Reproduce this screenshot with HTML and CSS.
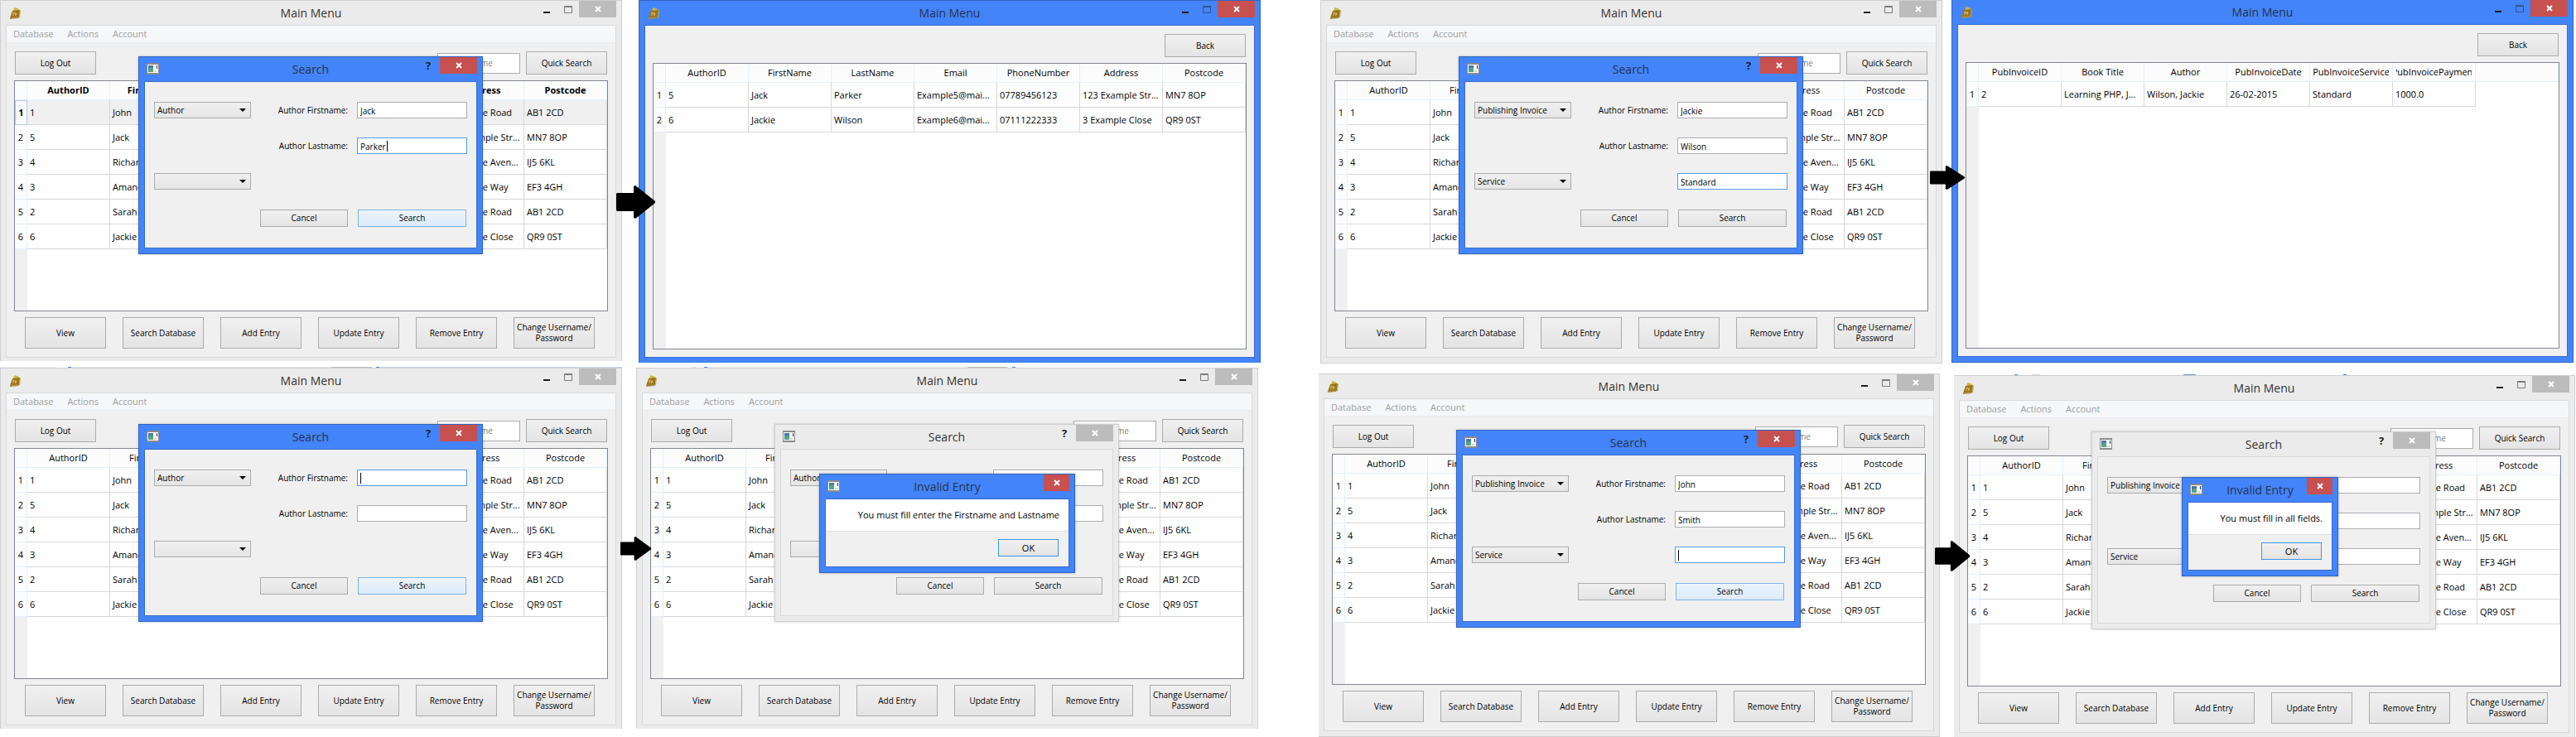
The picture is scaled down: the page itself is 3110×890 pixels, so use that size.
FILE: index.html
```html
<!DOCTYPE html>
<html lang="en">
<head>
<meta charset="utf-8">
<title>Main Menu – Search</title>
<link rel="stylesheet" href="styles.css">
</head>
<body>
<svg class="sprite" aria-hidden="true">
  <symbol id="i-app" viewBox="0 0 13 14">
    <path d="M5 1l1-1 5 2-1 2-6 1z" fill="#cdb83a"/>
    <path d="M3 4l9-1-1 9-11 1z" fill="#9a7414"/>
    <path d="M12 3l1 1-1 8-1 1z" fill="#c2a660"/>
    <path d="M0 12l11-1-1 2-10 1z" fill="#a98a4a"/>
    <path d="M4 10V6l2 1 1 3M7 6l1 3" stroke="#dcc27a" fill="none"/>
  </symbol>
  <symbol id="i-form" viewBox="0 0 15 14">
    <path d="M0 0h15v14H0z" fill="#8b8b8b"/>
    <path d="M1 2h13v10H1z" fill="#fafafa"/>
    <path d="M2 3h6v8H2z" fill="#4a7ba0"/>
    <path d="M3 6h5v5H2z" fill="#57a583"/>
    <path d="M12 3h1v4h-1z" fill="#1c3d66"/>
    <path d="M9 9h3v2H9z" fill="#d4d4d4"/>
  </symbol>
  <symbol id="i-close" viewBox="0 0 8 8"><path d="M1 1l6 6M7 1l-6 6" stroke="#fff" stroke-width="2"/></symbol>
  <symbol id="i-min" viewBox="0 0 8 3"><path d="M0 0h8v2H0z" fill="#1e1e1e"/></symbol>
  <symbol id="i-max" viewBox="0 0 10 9"><path d="M.5 1.5h9v7h-9zM0 .5h10" stroke="currentColor" fill="none"/></symbol>
  <symbol id="i-arrow" viewBox="0 0 48 40" preserveAspectRatio="none"><path d="M0 10l1-1h20V1l2-1 4 3 20 16v2L27 37l-4 3-2-1v-8H1l-1-1z"/></symbol>
</svg>
<main id="scene"></main>
<script src="app.js"></script>
</body>
</html>
```

FILE: styles.css
```css
* { box-sizing: border-box; }

body {
  margin: 0;
  background: #fff;
  color: #000;
  font: 11px/16px "Open Sans", "Noto Sans", sans-serif;
}

button, input, select { font: inherit; color: inherit; margin: 0; }

.sprite { position: absolute; width: 0; height: 0; }

/* rows of windows */
.strip { display: flex; align-items: flex-start; overflow: hidden; }
.strip.first { padding-right: 3px; }
.strip.second { padding-right: 1px; }
.shot { position: relative; flex: 751 1 0; min-width: 0; }
.shot.clipped { flex-grow: 750; }
.gap-s { margin-left: 11px; }
.gap-m { margin-left: 17px; }
.gap-l { margin-left: 20px; }
.gap-xl { margin-left: 72px; }
.second .gap-xl { margin-left: 73px; }
.drop-s { margin-top: 5px; }
.drop-m { margin-top: 12px; }
.drop-l { margin-top: 14px; }

/* edge of another window showing just above the frame */
.sliver { position: absolute; top: -1px; left: 0; right: 0; height: 1px; }
.sliver.a { background: linear-gradient(to right, #eee 0 68px, #fff 68px 82px, #4384fa 82px 86px, #e4e4e4 86px 400px, #bcbcbc 400px 449px, #fff 449px 454px, #4384fa 454px 458px, #c9d3e2 458px); }
.sliver.b { background: linear-gradient(to right, #fff 0 68px, #ddd 68px 72px, #fff 72px 82px, #4384fa 82px 86px, #f0f0f0 86px 400px, #bcbcbc 400px 448px, #fff 448px 454px, #4384fa 454px 458px, #fff 458px); }
.sliver.c { background: linear-gradient(to right, #fff 0 73px, #4384fa 73px 77px, #fff 77px 94px, #ddd 94px 104px, #fff 104px 277px, #7792c4 277px 292px, #fff 292px 470px, #4384fa 470px 474px, #fff 474px); }

/* window frame */
.window {
  display: flex;
  flex-direction: column;
  padding: 0 6px 6px;
  border: 1px solid #cfcfcf;
  background: #ebebeb;
}
.window.active { background: #4384fa; border-color: #3264bd; }
.window.cut { padding-bottom: 4px; border-bottom: 0; }
.window.cut-end { padding-bottom: 5px; border-bottom: 0; }
.window.open-end { border-bottom: 0; }
.window.open-top { border-top: 0; }
.window.open-left { border-left: 0; }

.titlebar {
  display: grid;
  grid-template-columns: 1fr auto 1fr;
  height: 29px;
  color: #333;
}
.active > .titlebar { color: #26334c; }
.titlebar h2 { margin: 0; font-size: 14px; font-weight: 400; line-height: 29px; }
.app-icon { width: 13px; height: 14px; margin: 8px 0 0 5px; }
.form-icon { width: 15px; height: 14px; margin: 7px 0 0 3px; }
.controls { display: flex; justify-content: flex-end; }
.controls button {
  display: flex;
  align-items: center;
  justify-content: center;
  height: 20px;
  padding: 0;
  border: 0;
  background: none;
}
.controls .tool { width: 26px; }
.controls .help { width: 28px; font-size: 13px; font-weight: 700; color: #1e1e1e; }
.controls .close { width: 45px; background: #bcbcbc; }
.controls .close svg { width: 8px; height: 8px; }
.active > .titlebar .close { background: #c75050; }
.controls .min { width: 8px; height: 3px; margin-top: 8px; }
.controls .max { width: 10px; height: 9px; color: #7b7b7b; }
.active > .titlebar .max { color: #35538c; }
.small > .titlebar .close { width: 31px; }

.box { border: 1px solid #d9d9d9; background: #f0f0f0; }
.active > .box { border-color: #396bcb; }

/* main window */
.menubar { display: flex; gap: 17px; height: 21px; padding: 0 8px; background: #f5f7f9; border-bottom: 1px solid #e7eaee; }
.menubar button { padding: 0; border: 0; background: none; color: #a0a0a0; line-height: 20px; }

.btn {
  padding: 0;
  border: 1px solid #acacac;
  background: linear-gradient(#f0f0f0, #e4e4e4);
  font-size: 10px;
  line-height: 13px;
}
.btn.hot { border-color: #7eb4ea; background: linear-gradient(#ecf4fc, #dcebfb); }
.btn.default { border-color: #3c96ea; }

.toolbar { display: flex; align-items: center; gap: 7px; padding: 10px 10px 7px; }
.toolbar .btn { width: 98px; height: 28px; }
.toolbar .spring { flex: 1; }
.quick { width: 100px; height: 25px; padding: 0 3px; border: 1px solid #acacac; background: #fff; font-size: 10px; }
.quick::placeholder { color: #808080; opacity: 1; }

.frame {
  min-height: 279px;
  margin: 0 9px;
  border: 1px solid #828790;
  background: linear-gradient(to right, #f0f0f0 15px, #fff 15px);
}
.result .frame { min-height: 346px; margin-bottom: 9px; }

.grid { width: 100%; table-layout: fixed; border-collapse: separate; border-spacing: 0; }
.grid .idx { width: 15px; }
.grid th, .grid td { padding: 0 3px; overflow: hidden; white-space: nowrap; text-align: left; font-weight: 400; }
.grid thead th { height: 23px; padding: 0 4px; background: #fcfcfd; border-right: 1px solid #e5f0fc; border-bottom: 1px solid #e5f0fc; }
.grid thead span { display: flex; justify-content: center; overflow: hidden; }
.grid tbody th { height: 30px; padding: 0; text-align: center; background: #fcfcfd; border-right: 1px solid #e5f0fc; border-bottom: 1px solid #e5f0fc; }
.grid tbody td { height: 30px; border-right: 1px solid #d8d8d8; border-bottom: 1px solid #d8d8d8; }
.grid tbody .blank { border: 0; }
.grid.picked thead th { font-weight: 700; }
.grid.picked tbody tr:first-child td { background: #f0f0f0; }
.grid.picked tbody tr:first-child th { font-weight: 700; border: 1px solid #b9c6da; background: #f7f9fc; }

.actions { display: flex; justify-content: space-between; gap: 20px; padding: 7px 25px 10px 22px; }
.actions .btn { flex: 1; height: 38px; }

/* dialogs lie over the main window */
.dialog { position: absolute; left: 167px; top: 68px; width: 416px; box-shadow: 0 0 3px rgba(0, 0, 0, .2); }
.clipped .dialog { left: 166px; }
.form { display: grid; grid-template-columns: 117px 1fr 133px; grid-template-rows: 20px 20px 20px 22px; gap: 23px 11px; padding: 24px 11px 25px; font-size: 10px; }
.form label { text-align: right; line-height: 20px; }
.form .col3 { grid-column: 3; }
.combo { position: relative; grid-column: 1; display: flex; }
.combo::after {
  content: "";
  position: absolute;
  right: 6px;
  top: 8px;
  border: 4px solid transparent;
  border-top-color: #000;
  border-bottom: 0;
}
.combo select { flex: 1; appearance: none; padding: 0 3px; border: 1px solid #acacac; border-radius: 0; background: linear-gradient(#f0f0f0, #e5e5e5); }
.field { width: 100%; padding: 1px 3px 0; border: 1px solid #abadb3; background: #fff no-repeat; outline: 0; }
.field.focus { border-color: #569de5; }
.field.caret-start { background-image: linear-gradient(#000, #000); background-size: 1px 13px; background-position: 3px 3px; }
.field.caret-end { background-image: linear-gradient(#000, #000); background-size: 1px 13px; background-position: 35px 3px; }
.form .buttons { grid-column: 1 / -1; display: flex; justify-content: flex-end; gap: 12px; padding: 1px 1px 0 0; }
.form .buttons .btn { width: 106px; height: 21px; }
.form .buttons .btn:last-child { width: 131px; }

.alert { position: absolute; left: 221px; top: 128px; width: 309px; box-shadow: 0 0 3px rgba(0, 0, 0, .25); }
.alert.narrow { left: 275px; top: 123px; width: 189px; }
.alert p { margin: 0; padding: 11px 11px 11px 0; border-bottom: 1px solid #dfdfdf; background: #fff; text-align: right; }
.alert footer { display: flex; justify-content: flex-end; padding: 9px 12px 12px; }
.alert .btn { width: 73px; height: 21px; font-size: 11px; }

.arrow { position: absolute; z-index: 2; fill: #000; }
.arrow.a1 { left: 744px; top: 224px; width: 48px; height: 40px; }
.arrow.a2 { left: 736px; top: 200px; width: 43px; height: 29px; }
.arrow.a3 { left: 749px; top: 204px; width: 38px; height: 29px; }
.arrow.a4 { left: 744px; top: 202px; width: 43px; height: 37px; }
.shot:has(.arrow) { z-index: 1; }
```

FILE: app.js
```js
const authors = {
  heads: ["AuthorID", "FirstName", "LastName", "Email", "PhoneNumber", "Address", "Postcode"],
  rows: [
    ["1", "John", "Smith", "Example1@mai...", "07123456789", "1 Example Road", "AB1 2CD"],
    ["5", "Jack", "Parker", "Example5@mai...", "07789456123", "123 Example Str...", "MN7 8OP"],
    ["4", "Richard", "Brown", "Example4@mai...", "07444555666", "4 Example Aven...", "IJ5 6KL"],
    ["3", "Amanda", "Jones", "Example3@mai...", "07333444555", "3 Example Way", "EF3 4GH"],
    ["2", "Sarah", "Smith", "Example2@mai...", "07222333444", "1 Example Road", "AB1 2CD"],
    ["6", "Jackie", "Wilson", "Example6@mai...", "07111222333", "3 Example Close", "QR9 0ST"],
  ],
};
const found = { heads: authors.heads, rows: [authors.rows[1], authors.rows[5]] };
const invoices = {
  heads: ["PubInvoiceID", "Book Title", "Author", "PubInvoiceDate", "PubInvoiceService", "PubInvoicePayment", ""],
  rows: [["2", "Learning PHP, J...", "Wilson, Jackie", "26-02-2015", "Standard", "1000.0", ""]],
};

const icon = (id, cls = "") => `<svg class="${cls}" aria-hidden="true"><use href="#${id}"/></svg>`;
const closeButton = `<button class="close" aria-label="Close">${icon("i-close")}</button>`;

const titlebar = (title, iconId, iconClass, tools = "") => `
  <header class="titlebar">${icon(iconId, iconClass)}<h2>${title}</h2>
    <div class="controls">${tools}${closeButton}</div></header>`;

const mainTitle = titlebar("Main Menu", "i-app", "app-icon",
  `<button class="tool" aria-label="Minimize">${icon("i-min", "min")}</button>
   <button class="tool" aria-label="Maximize">${icon("i-max", "max")}</button>`);

const table = ({ heads, rows }, picked) => `
  <div class="frame"><table class="grid ${picked ? "picked" : ""}">
    <thead><tr><th class="idx"></th>${heads.map(h => `<th><span>${h}</span></th>`).join("")}</tr></thead>
    <tbody>${rows.map((r, i) => `<tr><th>${i + 1}</th>${r.map(c => `<td${c ? "" : ' class="blank"'}>${c}</td>`).join("")}</tr>`).join("")}</tbody>
  </table></div>`;

const mainWindow = (cls, picked) => `
  <section class="window ${cls}">${mainTitle}
    <div class="box">
      <nav class="menubar"><button>Database</button><button>Actions</button><button>Account</button></nav>
      <div class="toolbar"><button class="btn">Log Out</button><span class="spring"></span>
        <input class="quick" type="text" placeholder="Author Name" aria-label="Quick search">
        <button class="btn">Quick Search</button></div>
      ${table(authors, picked)}
      <div class="actions">
        <button class="btn">View</button><button class="btn">Search Database</button>
        <button class="btn">Add Entry</button><button class="btn">Update Entry</button>
        <button class="btn">Remove Entry</button><button class="btn">Change Username/<br>Password</button>
      </div>
    </div>
  </section>`;

const resultWindow = (cls, data) => `
  <section class="window active result ${cls}">${mainTitle}
    <div class="box">
      <div class="toolbar"><span class="spring"></span><button class="btn">Back</button></div>
      ${table(data)}
    </div>
  </section>`;

let forms = 0;
const combo = (value, label) => `<span class="combo"><select aria-label="${label}"><option>${value}</option></select></span>`;
const searchDialog = ({ active = true, type, first = ["", ""], last = ["", ""], extra, by = "", hot = true }) => {
  const id = ++forms;
  return `
  <section class="window dialog ${active ? "active" : ""}">
    ${titlebar("Search", "i-form", "form-icon", '<button class="help" aria-label="Help">?</button>')}
    <form class="box form">
      ${combo(type, "Search in")}
      <label for="first${id}">Author Firstname:</label>
      <input class="field ${first[1]}" id="first${id}" type="text" value="${first[0]}">
      <span></span>
      <label for="last${id}">Author Lastname:</label>
      <input class="field ${last[1]}" id="last${id}" type="text" value="${last[0]}">
      ${combo(by, "Search by")}
      ${extra ? `<input class="field col3 ${extra[1]}" type="text" value="${extra[0]}" aria-label="${by}">` : ""}
      <div class="buttons"><button type="button" class="btn">Cancel</button><button type="button" class="btn ${hot ? "hot" : ""}">Search</button></div>
    </form>
  </section>`;
};

const alertBox = (text, cls = "") => `
  <section class="window active small alert ${cls}">
    ${titlebar("Invalid Entry", "i-form", "form-icon")}
    <div class="box"><p>${text}</p><footer><button class="btn default">OK</button></footer></div>
  </section>`;

const arrow = n => icon("i-arrow", `arrow a${n}`);
const shot = (cls, ...parts) => `<div class="shot ${cls}">${parts.join("")}</div>`;
const sliver = k => `<div class="sliver ${k}"></div>`;

document.getElementById("scene").innerHTML = `
  <div class="strip first">
    ${shot("", mainWindow("cut", true), searchDialog({ type: "Author", first: ["Jack", ""], last: ["Parker", "focus caret-end"] }), arrow(1))}
    ${shot("gap-l", resultWindow("open-end", found))}
    ${shot("gap-xl", mainWindow(""), searchDialog({ type: "Publishing Invoice", first: ["Jackie", ""], last: ["Wilson", ""], by: "Service", extra: ["Standard", "focus"], hot: false }), arrow(2))}
    ${shot("gap-s", resultWindow("open-top", invoices))}
  </div>
  <div class="strip second">
    ${shot("drop-s", sliver("a"), mainWindow("cut"), searchDialog({ type: "Author", first: ["", "focus caret-start"] }), arrow(3))}
    ${shot("gap-m drop-s", sliver("b"), mainWindow("cut"), searchDialog({ active: false, type: "Author", hot: false }), alertBox("You must fill enter the Firstname and Lastname"))}
    ${shot("gap-xl drop-m clipped", mainWindow("open-left"), searchDialog({ type: "Publishing Invoice", first: ["John", ""], last: ["Smith", ""], by: "Service", extra: ["", "focus caret-start"] }), arrow(4))}
    ${shot("gap-m drop-l clipped", sliver("c"), mainWindow("open-left cut-end"), searchDialog({ active: false, type: "Publishing Invoice", first: ["John", ""], last: ["Smith", ""], by: "Service", extra: ["", ""], hot: false }), alertBox("You must fill in all fields.", "narrow"))}
  </div>`;
```
